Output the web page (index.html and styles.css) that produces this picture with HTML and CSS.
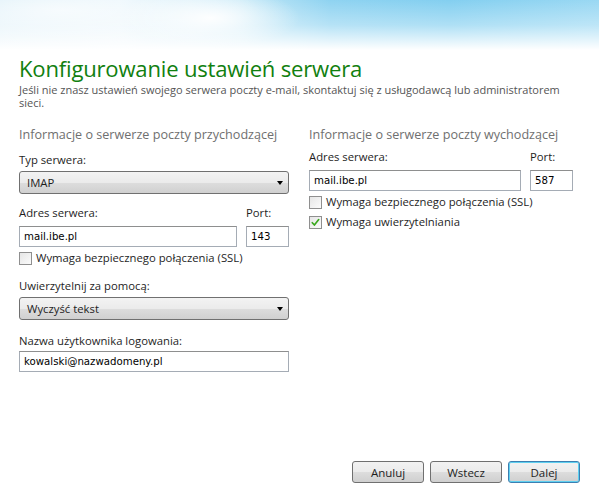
FILE: index.html
```html
<!DOCTYPE html>
<html lang="pl">
<head>
<meta charset="utf-8">
<title>Konfigurowanie ustawień serwera</title>
<link rel="stylesheet" href="styles.css">
</head>
<body>
<div class="window">
  <div class="sky"></div>
  <div class="content">
    <h1 class="title">Konfigurowanie ustawień serwera</h1>
    <p class="intro">Jeśli nie znasz ustawień swojego serwera poczty e-mail, skontaktuj się z usługodawcą lub administratorem sieci.</p>
    <div class="columns">
      <section class="col col-left">
        <h2 class="section">Informacje o serwerze poczty przychodzącej</h2>
        <div class="label l-type">Typ serwera:</div>
        <div class="select"><span>IMAP</span><i class="arrow"></i></div>
        <div class="row labels l-addr">
          <span class="grow">Adres serwera:</span>
          <span class="portlabel">Port:</span>
        </div>
        <div class="row">
          <div class="input grow">mail.ibe.pl</div>
          <div class="input port">143</div>
        </div>
        <label class="check"><span class="box"></span>Wymaga bezpiecznego połączenia (SSL)</label>
        <div class="label l-auth">Uwierzytelnij za pomocą:</div>
        <div class="select"><span>Wyczyść tekst</span><i class="arrow"></i></div>
        <div class="label l-user">Nazwa użytkownika logowania:</div>
        <div class="input">kowalski@nazwadomeny.pl</div>
      </section>
      <section class="col col-right">
        <h2 class="section">Informacje o serwerze poczty wychodzącej</h2>
        <div class="row labels l-addr2">
          <span class="grow">Adres serwera:</span>
          <span class="portlabel">Port:</span>
        </div>
        <div class="row">
          <div class="input grow">mail.ibe.pl</div>
          <div class="input port">587</div>
        </div>
        <label class="check"><span class="box"></span>Wymaga bezpiecznego połączenia (SSL)</label>
        <label class="check check2"><span class="box"><svg viewBox="0 0 12 12" width="11" height="11"><path d="M2.5 6.2 L4.8 8.8 L9.5 2.8" fill="none" stroke="#3aa81e" stroke-width="1.8" stroke-linecap="round" stroke-linejoin="round"/></svg></span>Wymaga uwierzytelniania</label>
      </section>
    </div>
  </div>
  <div class="buttons">
    <button class="btn">Anuluj</button>
    <button class="btn">Wstecz</button>
    <button class="btn default">Dalej</button>
  </div>
</div>
</body>
</html>
```
FILE: styles.css
```css
* { box-sizing: border-box; }
html, body { margin: 0; padding: 0; }
body {
  width: 599px;
  height: 499px;
  background: #ffffff;
  font-family: "Open Sans", "Noto Sans", sans-serif;
  color: #1e1e1e;
  overflow: hidden;
}
.window {
  width: 599px;
  height: 499px;
  display: flex;
  flex-direction: column;
}
.sky {
  height: 50px;
  flex: none;
  background:
    radial-gradient(ellipse 90px 30px at 210px 18px, rgba(255,255,255,0.95), rgba(255,255,255,0) 100%),
    radial-gradient(ellipse 200px 40px at 60px 10px, rgba(255,255,255,0.7), rgba(255,255,255,0) 100%),
    linear-gradient(180deg, rgba(255,255,255,0) 0%, rgba(255,255,255,0.35) 50%, #ffffff 100%),
    linear-gradient(90deg, #d8eef8 0%, #e6f4fb 20%, #c4e8f7 40%, #8fd3f1 55%, #83cff0 75%, #9ad8f3 100%);
}
.content {
  padding: 0 19px;
  flex: 1;
}
.title {
  margin: 3px 0 0;
  font-weight: 400;
  font-size: 22.1px;
  line-height: 30px;
  color: #11800f;
  letter-spacing: -0.2px;
}
.intro {
  margin: 0;
  font-size: 11px;
  line-height: 13px;
  color: #555555;
  width: 565px;
}
.columns {
  display: flex;
  gap: 20px;
  margin-top: 17px;
}
.col { display: flex; flex-direction: column; }
.col-left { width: 270px; }
.col-right { width: 264px; }
.section {
  margin: 0;
  font-weight: 400;
  font-size: 12.6px;
  line-height: 18px;
  color: #6f6f6f;
  white-space: nowrap;
}
.label {
  font-size: 11.3px;
  line-height: 16px;
}
.l-type { margin-top: 8px; margin-bottom: 3px; }
.l-auth { margin-top: 12px; margin-bottom: 3px; }
.l-user { margin-top: 13px; margin-bottom: 2px; }
.row { display: flex; gap: 9px; }
.labels { font-size: 11.3px; line-height: 16px; margin-bottom: 5px; }
.l-addr { margin-top: 11px; }
.l-addr2 { margin-top: 5px; }
.grow { flex: 1; }
.portlabel { width: 43px; }
.select {
  height: 23px;
  border: 1px solid #707070;
  border-radius: 3px;
  background: linear-gradient(180deg, #f3f3f3 0%, #ebebeb 50%, #dddddd 51%, #d0d0d0 100%);
  display: flex;
  align-items: center;
  justify-content: space-between;
  padding: 0 5px 0 7px;
  font-size: 11.3px;
}
.arrow {
  width: 0; height: 0;
  border-left: 3.5px solid transparent;
  border-right: 3.5px solid transparent;
  border-top: 4px solid #000;
}
.input {
  height: 21px;
  border: 1px solid #a5acb5;
  border-top-color: #8e8f8f;
  background: #fff;
  font-family: "DejaVu Sans", sans-serif;
  font-size: 10.2px;
  line-height: 19px;
  padding: 0 4px;
  color: #000;
}
.port { width: 43px; }
.check {
  display: flex;
  align-items: center;
  font-size: 11.3px;
  line-height: 16px;
  margin-top: 3px;
  gap: 4px;
}
.check2 { margin-top: 4px; }
.box {
  width: 13px;
  height: 13px;
  border: 1px solid #8f8f8f;
  background: linear-gradient(135deg, #e6e6e6, #fbfbfb);
  display: flex;
  align-items: center;
  justify-content: center;
}
.buttons {
  display: flex;
  justify-content: flex-end;
  gap: 6px;
  padding: 0 19px 16px 0;
}
.btn {
  width: 72px;
  height: 22px;
  border: 1px solid #707070;
  border-radius: 3px;
  background: linear-gradient(180deg, #f2f2f2 0%, #ebebeb 50%, #dddddd 51%, #cfcfcf 100%);
  font-family: "Open Sans", "Noto Sans", sans-serif;
  font-size: 11.5px;
  color: #1e1e1e;
  padding: 0;
}
.btn.default {
  border-color: #3c7fb1;
  box-shadow: inset 0 0 0 1px #5fd0f0;
}
```
